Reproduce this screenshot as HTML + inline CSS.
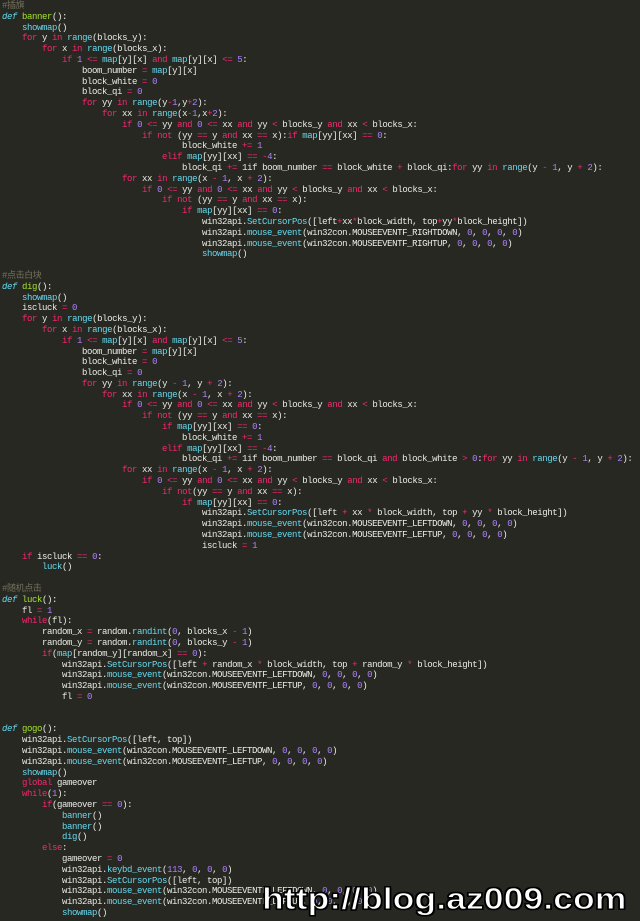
<!DOCTYPE html>
<html><head><meta charset="utf-8"><style>
html,body{margin:0;padding:0;background:#272822;width:640px;height:921px;overflow:hidden}
pre{margin:0;padding:1px 0 0 2px;font-family:"Liberation Mono","Noto Sans CJK SC",monospace;font-size:9px;letter-spacing:-0.4px;line-height:10.8px;color:#ececE6;white-space:pre}
k{color:#f92672}f{color:#66d9ef}n{color:#ae81ff}c{color:#75715e}d{color:#66d9ef;font-style:italic}g{color:#a6e22e}
.wm{position:absolute;left:262px;top:884px;transform-origin:0 0;transform:scaleX(1.15);font-family:"Liberation Sans",sans-serif;font-weight:bold;font-size:31px;color:#fff;-webkit-text-stroke:1px #000;text-shadow:1px 1px 0 #000,-1px -1px 0 #000,1px -1px 0 #000,-1px 1px 0 #000;line-height:30px}
</style></head><body>
<pre><c>#插旗</c>
<d>def</d> <g>banner</g>():
    <f>showmap</f>()
    <k>for</k> y <k>in</k> <f>range</f>(blocks_y):
        <k>for</k> x <k>in</k> <f>range</f>(blocks_x):
            <k>if</k> <n>1</n> <k>&lt;=</k> <f>map</f>[y][x] <k>and</k> <f>map</f>[y][x] <k>&lt;=</k> <n>5</n>:
                boom_number <k>=</k> <f>map</f>[y][x]
                block_white <k>=</k> <n>0</n>
                block_qi <k>=</k> <n>0</n>
                <k>for</k> yy <k>in</k> <f>range</f>(y<k>-</k><n>1</n>,y<k>+</k><n>2</n>):
                    <k>for</k> xx <k>in</k> <f>range</f>(x<k>-</k><n>1</n>,x<k>+</k><n>2</n>):
                        <k>if</k> <n>0</n> <k>&lt;=</k> yy <k>and</k> <n>0</n> <k>&lt;=</k> xx <k>and</k> yy <k>&lt;</k> blocks_y <k>and</k> xx <k>&lt;</k> blocks_x:
                            <k>if</k> <k>not</k> (yy <k>==</k> y <k>and</k> xx <k>==</k> x):<k>if</k> <f>map</f>[yy][xx] <k>==</k> <n>0</n>:
                                    block_white <k>+=</k> <n>1</n>
                                <k>elif</k> <f>map</f>[yy][xx] <k>==</k> <k>-</k><n>4</n>:
                                    block_qi <k>+=</k> 1if boom_number <k>==</k> block_white <k>+</k> block_qi:<k>for</k> yy <k>in</k> <f>range</f>(y <k>-</k> <n>1</n>, y <k>+</k> <n>2</n>):
                        <k>for</k> xx <k>in</k> <f>range</f>(x <k>-</k> <n>1</n>, x <k>+</k> <n>2</n>):
                            <k>if</k> <n>0</n> <k>&lt;=</k> yy <k>and</k> <n>0</n> <k>&lt;=</k> xx <k>and</k> yy <k>&lt;</k> blocks_y <k>and</k> xx <k>&lt;</k> blocks_x:
                                <k>if</k> <k>not</k> (yy <k>==</k> y <k>and</k> xx <k>==</k> x):
                                    <k>if</k> <f>map</f>[yy][xx] <k>==</k> <n>0</n>:
                                        win32api.<f>SetCursorPos</f>([left<k>+</k>xx<k>*</k>block_width, top<k>+</k>yy<k>*</k>block_height])
                                        win32api.<f>mouse_event</f>(win32con.MOUSEEVENTF_RIGHTDOWN, <n>0</n>, <n>0</n>, <n>0</n>, <n>0</n>)
                                        win32api.<f>mouse_event</f>(win32con.MOUSEEVENTF_RIGHTUP, <n>0</n>, <n>0</n>, <n>0</n>, <n>0</n>)
                                        <f>showmap</f>()

<c>#点击白块</c>
<d>def</d> <g>dig</g>():
    <f>showmap</f>()
    iscluck <k>=</k> <n>0</n>
    <k>for</k> y <k>in</k> <f>range</f>(blocks_y):
        <k>for</k> x <k>in</k> <f>range</f>(blocks_x):
            <k>if</k> <n>1</n> <k>&lt;=</k> <f>map</f>[y][x] <k>and</k> <f>map</f>[y][x] <k>&lt;=</k> <n>5</n>:
                boom_number <k>=</k> <f>map</f>[y][x]
                block_white <k>=</k> <n>0</n>
                block_qi <k>=</k> <n>0</n>
                <k>for</k> yy <k>in</k> <f>range</f>(y <k>-</k> <n>1</n>, y <k>+</k> <n>2</n>):
                    <k>for</k> xx <k>in</k> <f>range</f>(x <k>-</k> <n>1</n>, x <k>+</k> <n>2</n>):
                        <k>if</k> <n>0</n> <k>&lt;=</k> yy <k>and</k> <n>0</n> <k>&lt;=</k> xx <k>and</k> yy <k>&lt;</k> blocks_y <k>and</k> xx <k>&lt;</k> blocks_x:
                            <k>if</k> <k>not</k> (yy <k>==</k> y <k>and</k> xx <k>==</k> x):
                                <k>if</k> <f>map</f>[yy][xx] <k>==</k> <n>0</n>:
                                    block_white <k>+=</k> <n>1</n>
                                <k>elif</k> <f>map</f>[yy][xx] <k>==</k> <k>-</k><n>4</n>:
                                    block_qi <k>+=</k> 1if boom_number <k>==</k> block_qi <k>and</k> block_white <k>&gt;</k> <n>0</n>:<k>for</k> yy <k>in</k> <f>range</f>(y <k>-</k> <n>1</n>, y <k>+</k> <n>2</n>):
                        <k>for</k> xx <k>in</k> <f>range</f>(x <k>-</k> <n>1</n>, x <k>+</k> <n>2</n>):
                            <k>if</k> <n>0</n> <k>&lt;=</k> yy <k>and</k> <n>0</n> <k>&lt;=</k> xx <k>and</k> yy <k>&lt;</k> blocks_y <k>and</k> xx <k>&lt;</k> blocks_x:
                                <k>if</k> <k>not</k>(yy <k>==</k> y <k>and</k> xx <k>==</k> x):
                                    <k>if</k> <f>map</f>[yy][xx] <k>==</k> <n>0</n>:
                                        win32api.<f>SetCursorPos</f>([left <k>+</k> xx <k>*</k> block_width, top <k>+</k> yy <k>*</k> block_height])
                                        win32api.<f>mouse_event</f>(win32con.MOUSEEVENTF_LEFTDOWN, <n>0</n>, <n>0</n>, <n>0</n>, <n>0</n>)
                                        win32api.<f>mouse_event</f>(win32con.MOUSEEVENTF_LEFTUP, <n>0</n>, <n>0</n>, <n>0</n>, <n>0</n>)
                                        iscluck <k>=</k> <n>1</n>
    <k>if</k> iscluck <k>==</k> <n>0</n>:
        <f>luck</f>()

<c>#随机点击</c>
<d>def</d> <g>luck</g>():
    fl <k>=</k> <n>1</n>
    <k>while</k>(fl):
        random_x <k>=</k> random.<f>randint</f>(<n>0</n>, blocks_x <k>-</k> <n>1</n>)
        random_y <k>=</k> random.<f>randint</f>(<n>0</n>, blocks_y <k>-</k> <n>1</n>)
        <k>if</k>(<f>map</f>[random_y][random_x] <k>==</k> <n>0</n>):
            win32api.<f>SetCursorPos</f>([left <k>+</k> random_x <k>*</k> block_width, top <k>+</k> random_y <k>*</k> block_height])
            win32api.<f>mouse_event</f>(win32con.MOUSEEVENTF_LEFTDOWN, <n>0</n>, <n>0</n>, <n>0</n>, <n>0</n>)
            win32api.<f>mouse_event</f>(win32con.MOUSEEVENTF_LEFTUP, <n>0</n>, <n>0</n>, <n>0</n>, <n>0</n>)
            fl <k>=</k> <n>0</n>


<d>def</d> <g>gogo</g>():
    win32api.<f>SetCursorPos</f>([left, top])
    win32api.<f>mouse_event</f>(win32con.MOUSEEVENTF_LEFTDOWN, <n>0</n>, <n>0</n>, <n>0</n>, <n>0</n>)
    win32api.<f>mouse_event</f>(win32con.MOUSEEVENTF_LEFTUP, <n>0</n>, <n>0</n>, <n>0</n>, <n>0</n>)
    <f>showmap</f>()
    <k>global</k> gameover
    <k>while</k>(<n>1</n>):
        <k>if</k>(gameover <k>==</k> <n>0</n>):
            <f>banner</f>()
            <f>banner</f>()
            <f>dig</f>()
        <k>else</k>:
            gameover <k>=</k> <n>0</n>
            win32api.<f>keybd_event</f>(<n>113</n>, <n>0</n>, <n>0</n>, <n>0</n>)
            win32api.<f>SetCursorPos</f>([left, top])
            win32api.<f>mouse_event</f>(win32con.MOUSEEVENTF_LEFTDOWN, <n>0</n>, <n>0</n>, <n>0</n>, <n>0</n>)
            win32api.<f>mouse_event</f>(win32con.MOUSEEVENTF_LEFTUP, <n>0</n>, <n>0</n>, <n>0</n>, <n>0</n>)
            <f>showmap</f>()</pre>
<div class="wm">http://blog.az009.com</div>
</body></html>
